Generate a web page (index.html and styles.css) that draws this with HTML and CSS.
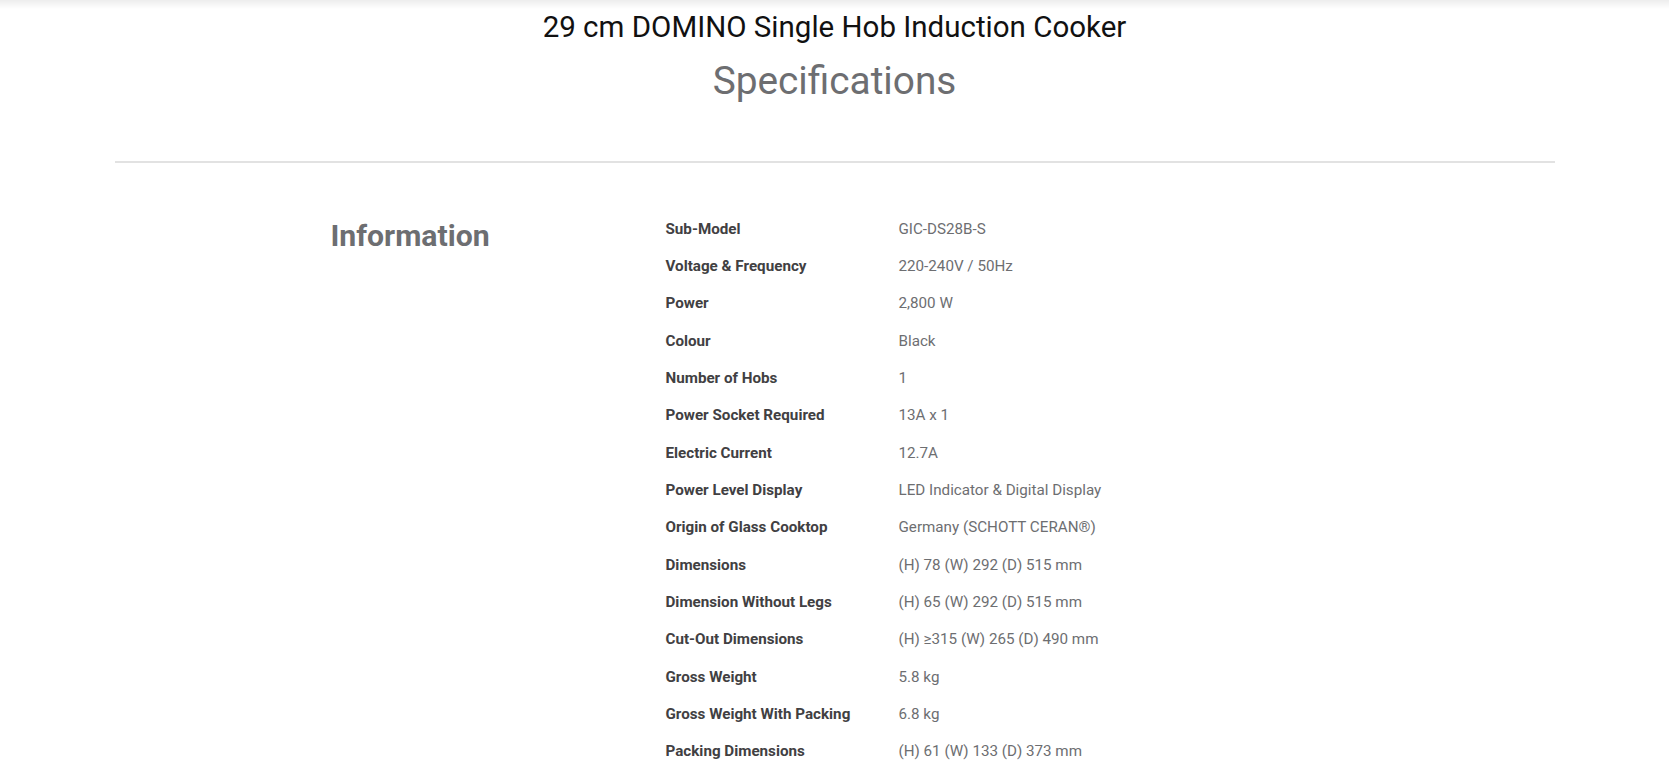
FILE: index.html
```html
<!DOCTYPE html>
<html>
<head>
<meta charset="utf-8">
<link rel="stylesheet" href="styles.css">
</head>
<body>
<div class="topshade"></div>
<header class="head">
  <h1 class="product">29 cm DOMINO Single Hob Induction Cooker</h1>
  <h2 class="spec-title">Specifications</h2>
</header>
<div class="divider"></div>
<section class="info">
  <h3 class="info-title">Information</h3>
  <div class="spec-table">
    <div class="row"><div class="label">Sub-Model</div><div class="value">GIC-DS28B-S</div></div>
    <div class="row"><div class="label">Voltage &amp; Frequency</div><div class="value">220-240V / 50Hz</div></div>
    <div class="row"><div class="label">Power</div><div class="value">2,800 W</div></div>
    <div class="row"><div class="label">Colour</div><div class="value">Black</div></div>
    <div class="row"><div class="label">Number of Hobs</div><div class="value">1</div></div>
    <div class="row"><div class="label">Power Socket Required</div><div class="value">13A x 1</div></div>
    <div class="row"><div class="label">Electric Current</div><div class="value">12.7A</div></div>
    <div class="row"><div class="label">Power Level Display</div><div class="value">LED Indicator &amp; Digital Display</div></div>
    <div class="row"><div class="label">Origin of Glass Cooktop</div><div class="value">Germany (SCHOTT CERAN®)</div></div>
    <div class="row"><div class="label">Dimensions</div><div class="value">(H) 78 (W) 292 (D) 515 mm</div></div>
    <div class="row"><div class="label">Dimension Without Legs</div><div class="value">(H) 65 (W) 292 (D) 515 mm</div></div>
    <div class="row"><div class="label">Cut-Out Dimensions</div><div class="value">(H) ≥315 (W) 265 (D) 490 mm</div></div>
    <div class="row"><div class="label">Gross Weight</div><div class="value">5.8 kg</div></div>
    <div class="row"><div class="label">Gross Weight With Packing</div><div class="value">6.8 kg</div></div>
    <div class="row"><div class="label">Packing Dimensions</div><div class="value">(H) 61 (W) 133 (D) 373 mm</div></div>
  </div>
</section>
</body>
</html>
```
FILE: styles.css
```css
html, body {
  margin: 0;
  padding: 0;
  background: #fff;
  font-family: Roboto, "Liberation Sans", Arial, sans-serif;
}
.topshade {
  position: fixed;
  top: 0;
  left: 0;
  right: 0;
  height: 9px;
  background: linear-gradient(to bottom, rgba(0,0,0,0.07), rgba(0,0,0,0));
  pointer-events: none;
}
.head {
  text-align: center;
  padding-top: 9px;
}
.product {
  margin: 0;
  font-size: 29.5px;
  line-height: 36px;
  font-weight: 400;
  color: #111;
}
.spec-title {
  margin: 12px 0 0;
  font-size: 38.8px;
  line-height: 48px;
  font-weight: 400;
  color: #6d6e71;
}
.divider {
  width: 1440px;
  margin: 56px auto 0;
  height: 2px;
  background: #e2e2e2;
}
.info {
  width: 1008px;
  margin: 47px auto 0;
  display: grid;
  grid-template-columns: 335px 1fr;
}
.info-title {
  margin: 8px 0 0;
  font-size: 30.2px;
  line-height: 36px;
  font-weight: 700;
  color: #6d6e71;
}
.row {
  display: grid;
  grid-template-columns: 233px 1fr;
  height: 37.33px;
  align-items: center;
  font-size: 15.2px;
}
.label {
  font-weight: 700;
  color: #414042;
}
.value {
  color: #6d6e71;
}
```
